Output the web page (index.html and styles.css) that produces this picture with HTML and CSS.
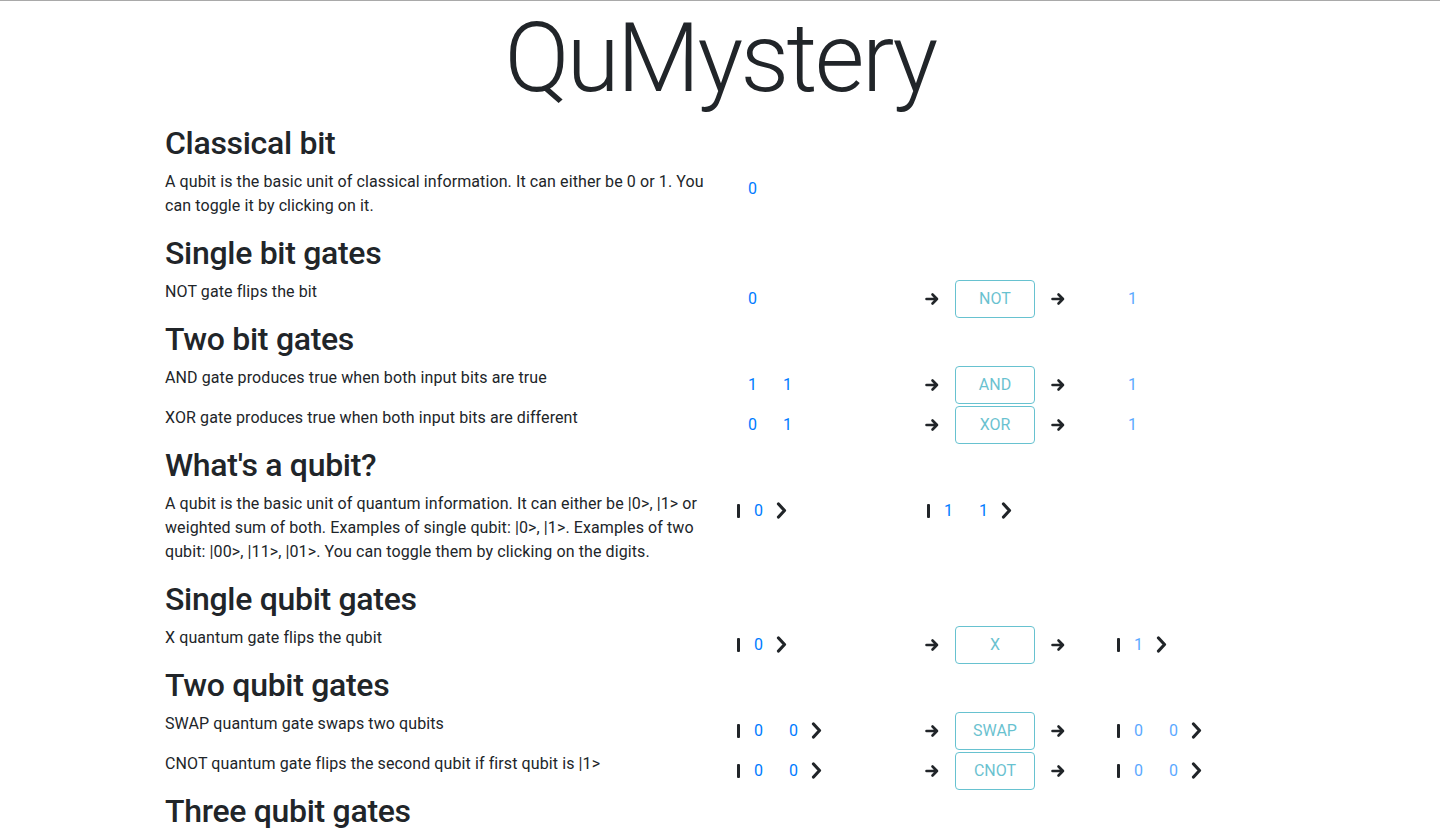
FILE: index.html
```html
<!DOCTYPE html>
<html lang="en">
<head>
    <meta charset="UTF-8">
    <meta name="viewport" content="width=device-width, initial-scale=1.0">
    <title>QuMystery</title>
    <link rel="stylesheet" href="styles.css">
</head>
<body>
    <div class="container">
        <h1 class="title">QuMystery</h1>

        <h2>Classical bit</h2>
        <div class="row">
            <p>A qubit is the basic unit of classical information. It can either be 0 or 1. You can toggle it by clicking on it.</p>
            <div class="demo">
                <div class="cell"><button class="bit">0</button></div>
            </div>
        </div>

        <h2>Single bit gates</h2>
        <div class="row" data-gate="not">
            <p>NOT gate flips the bit</p>
            <div class="demo">
                <div class="cell"><button class="bit in">0</button></div>
                <div class="cell gate-cell">
                    <svg class="arrow" viewBox="0 0 14 14"><path d="M1.5 7H12M7.5 2.5L12 7L7.5 11.5"/></svg>
                    <button class="gate" disabled>NOT</button>
                    <svg class="arrow" viewBox="0 0 14 14"><path d="M1.5 7H12M7.5 2.5L12 7L7.5 11.5"/></svg>
                </div>
                <div class="cell"><button class="bit out" disabled>1</button></div>
            </div>
        </div>

        <h2>Two bit gates</h2>
        <div class="row" data-gate="and">
            <p>AND gate produces true when both input bits are true</p>
            <div class="demo">
                <div class="cell"><button class="bit in">1</button><button class="bit in">1</button></div>
                <div class="cell gate-cell">
                    <svg class="arrow" viewBox="0 0 14 14"><path d="M1.5 7H12M7.5 2.5L12 7L7.5 11.5"/></svg>
                    <button class="gate" disabled>AND</button>
                    <svg class="arrow" viewBox="0 0 14 14"><path d="M1.5 7H12M7.5 2.5L12 7L7.5 11.5"/></svg>
                </div>
                <div class="cell"><button class="bit out" disabled>1</button></div>
            </div>
        </div>
        <div class="row" data-gate="xor">
            <p>XOR gate produces true when both input bits are different</p>
            <div class="demo">
                <div class="cell"><button class="bit in">0</button><button class="bit in">1</button></div>
                <div class="cell gate-cell">
                    <svg class="arrow" viewBox="0 0 14 14"><path d="M1.5 7H12M7.5 2.5L12 7L7.5 11.5"/></svg>
                    <button class="gate" disabled>XOR</button>
                    <svg class="arrow" viewBox="0 0 14 14"><path d="M1.5 7H12M7.5 2.5L12 7L7.5 11.5"/></svg>
                </div>
                <div class="cell"><button class="bit out" disabled>1</button></div>
            </div>
        </div>

        <h2>What's a qubit?</h2>
        <div class="row">
            <p>A qubit is the basic unit of quantum information. It can either be |0&gt;, |1&gt; or weighted sum of both. Examples of single qubit: |0&gt;, |1&gt;. Examples of two qubit: |00&gt;, |11&gt;, |01&gt;. You can toggle them by clicking on the digits.</p>
            <div class="demo">
                <div class="cell">
                    <span class="ket-bar"></span><button class="bit">0</button>
                    <svg class="chevron" viewBox="0 0 11 17"><path d="M2.5 2L8.5 8.5L2.5 15"/></svg>
                </div>
                <div class="cell">
                    <span class="ket-bar"></span><button class="bit">1</button><button class="bit">1</button>
                    <svg class="chevron" viewBox="0 0 11 17"><path d="M2.5 2L8.5 8.5L2.5 15"/></svg>
                </div>
            </div>
        </div>

        <h2>Single qubit gates</h2>
        <div class="row" data-gate="x">
            <p>X quantum gate flips the qubit</p>
            <div class="demo">
                <div class="cell">
                    <span class="ket-bar"></span><button class="bit in">0</button>
                    <svg class="chevron" viewBox="0 0 11 17"><path d="M2.5 2L8.5 8.5L2.5 15"/></svg>
                </div>
                <div class="cell gate-cell">
                    <svg class="arrow" viewBox="0 0 14 14"><path d="M1.5 7H12M7.5 2.5L12 7L7.5 11.5"/></svg>
                    <button class="gate" disabled>X</button>
                    <svg class="arrow" viewBox="0 0 14 14"><path d="M1.5 7H12M7.5 2.5L12 7L7.5 11.5"/></svg>
                </div>
                <div class="cell">
                    <span class="ket-bar"></span><button class="bit out" disabled>1</button>
                    <svg class="chevron" viewBox="0 0 11 17"><path d="M2.5 2L8.5 8.5L2.5 15"/></svg>
                </div>
            </div>
        </div>

        <h2>Two qubit gates</h2>
        <div class="row" data-gate="swap">
            <p>SWAP quantum gate swaps two qubits</p>
            <div class="demo">
                <div class="cell">
                    <span class="ket-bar"></span><button class="bit in">0</button><button class="bit in">0</button>
                    <svg class="chevron" viewBox="0 0 11 17"><path d="M2.5 2L8.5 8.5L2.5 15"/></svg>
                </div>
                <div class="cell gate-cell">
                    <svg class="arrow" viewBox="0 0 14 14"><path d="M1.5 7H12M7.5 2.5L12 7L7.5 11.5"/></svg>
                    <button class="gate" disabled>SWAP</button>
                    <svg class="arrow" viewBox="0 0 14 14"><path d="M1.5 7H12M7.5 2.5L12 7L7.5 11.5"/></svg>
                </div>
                <div class="cell">
                    <span class="ket-bar"></span><button class="bit out" disabled>0</button><button class="bit out" disabled>0</button>
                    <svg class="chevron" viewBox="0 0 11 17"><path d="M2.5 2L8.5 8.5L2.5 15"/></svg>
                </div>
            </div>
        </div>
        <div class="row" data-gate="cnot">
            <p>CNOT quantum gate flips the second qubit if first qubit is |1&gt;</p>
            <div class="demo">
                <div class="cell">
                    <span class="ket-bar"></span><button class="bit in">0</button><button class="bit in">0</button>
                    <svg class="chevron" viewBox="0 0 11 17"><path d="M2.5 2L8.5 8.5L2.5 15"/></svg>
                </div>
                <div class="cell gate-cell">
                    <svg class="arrow" viewBox="0 0 14 14"><path d="M1.5 7H12M7.5 2.5L12 7L7.5 11.5"/></svg>
                    <button class="gate" disabled>CNOT</button>
                    <svg class="arrow" viewBox="0 0 14 14"><path d="M1.5 7H12M7.5 2.5L12 7L7.5 11.5"/></svg>
                </div>
                <div class="cell">
                    <span class="ket-bar"></span><button class="bit out" disabled>0</button><button class="bit out" disabled>0</button>
                    <svg class="chevron" viewBox="0 0 11 17"><path d="M2.5 2L8.5 8.5L2.5 15"/></svg>
                </div>
            </div>
        </div>

        <h2>Three qubit gates</h2>
    </div>

    <script>
        const gates = {
            not: (a) => [1 - a[0]],
            and: (a) => [a[0] & a[1]],
            xor: (a) => [a[0] ^ a[1]],
            x: (a) => [1 - a[0]],
            swap: (a) => [a[1], a[0]],
            cnot: (a) => [a[0], a[0] ? 1 - a[1] : a[1]]
        };

        function update(row) {
            const gate = gates[row.dataset.gate];
            if (!gate) return;
            const inputs = [...row.querySelectorAll(".bit.in")].map(b => Number(b.textContent));
            const outputs = row.querySelectorAll(".bit.out");
            gate(inputs).forEach((v, i) => outputs[i].textContent = v);
        }

        document.querySelectorAll(".bit:not(.out)").forEach(btn => {
            btn.addEventListener("click", () => {
                btn.textContent = btn.textContent === "0" ? "1" : "0";
                update(btn.closest(".row"));
            });
        });
    </script>
</body>
</html>
```

FILE: styles.css
```css
body {
    margin: 0;
    box-shadow: inset 0 1px #a9a9a9;
    font-family: Roboto, "Liberation Sans", sans-serif;
    font-size: 16px;
    line-height: 1.5;
    color: #212529;
    background-color: #fff;
}
.container {
    max-width: 1110px;
    margin: 0 auto;
    padding: 0 15px;
}
.title {
    margin: 0 0 8px;
    font-size: 96px;
    font-weight: 300;
    line-height: 116px;
    letter-spacing: -2.6px;
    text-align: center;
}
h2 {
    margin: 0 0 8px;
    font-size: 32px;
    font-weight: 500;
    line-height: 38px;
    letter-spacing: -0.3px;
}
.row {
    display: grid;
    grid-template-columns: 540px 540px;
    column-gap: 30px;
    align-items: start;
}
.row p {
    margin: 0 0 16px;
    letter-spacing: 0.1px;
}
.demo {
    display: grid;
    grid-template-columns: repeat(3, 160px);
    column-gap: 30px;
}
.cell {
    display: flex;
    align-items: center;
}
.gate-cell {
    gap: 16px;
}
.bit {
    padding: 6px 12px;
    border: 1px solid transparent;
    background: none;
    font-family: inherit;
    font-size: 16px;
    line-height: 1.5;
    color: #007bff;
    cursor: pointer;
}
.bit:disabled {
    opacity: 0.65;
    cursor: default;
}
.gate {
    width: 80px;
    padding: 6px 12px;
    border: 1px solid #17a2b8;
    border-radius: 4px;
    background: #fff;
    font-family: inherit;
    font-size: 16px;
    line-height: 1.5;
    color: #17a2b8;
    opacity: 0.65;
}
.arrow {
    width: 14px;
    height: 14px;
    fill: none;
    stroke: #212529;
    stroke-width: 2.6;
    stroke-linecap: round;
    stroke-linejoin: round;
}
.ket-bar {
    width: 3px;
    height: 14px;
    margin: 0 1px 0 2px;
    background: #212529;
    border-radius: 1px;
}
.chevron {
    width: 11px;
    height: 17px;
    margin-top: -2px;
    fill: none;
    stroke: #212529;
    stroke-width: 3.2;
    stroke-linecap: round;
    stroke-linejoin: round;
}
```
